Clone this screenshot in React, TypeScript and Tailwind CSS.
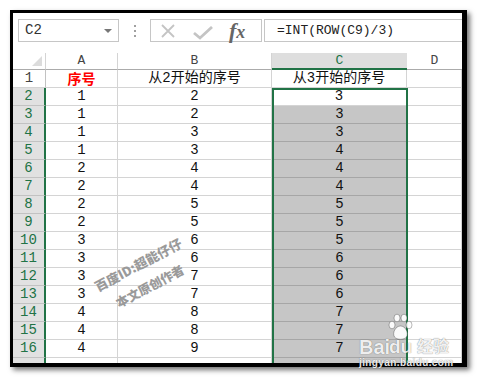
import React from "react";

const colA = [1, 1, 1, 1, 2, 2, 2, 2, 3, 3, 3, 3, 4, 4, 4];
const colB = [2, 2, 3, 3, 4, 4, 5, 5, 6, 6, 7, 7, 8, 8, 9];
const colC = [3, 3, 3, 4, 4, 4, 5, 5, 5, 6, 6, 6, 7, 7, 7];

const cell = "flex items-center justify-center border-r border-b border-[#d4d4d4] h-[18px]";
const logoText =
  "font-['Liberation_Sans',sans-serif] font-bold leading-none text-white/90 [text-shadow:0_0_1px_rgba(0,0,0,0.6)]";

const Toolbar = () => (
  <div className="flex h-[40px] shrink-0 items-start pl-[5px] pt-[6px]">
    <div className="relative flex h-[23px] w-[101px] items-center border border-[#c6c6c6] pl-[6px] text-[14px] text-[#333]">
      C2
      <div className="absolute right-[6px] top-[9px] h-0 w-0 border-x-[4px] border-t-[4px] border-x-transparent border-t-[#777]" />
    </div>
    <div className="flex h-[23px] w-[31px] flex-col items-center justify-center gap-[3px]">
      <div className="h-[2px] w-[2px] bg-[#a0a0a0]" />
      <div className="h-[2px] w-[2px] bg-[#a0a0a0]" />
      <div className="h-[2px] w-[2px] bg-[#a0a0a0]" />
    </div>
    <div className="flex h-[23px] w-[112px] items-center border border-[#c6c6c6]">
      <svg width="16" height="16" viewBox="0 0 16 16" className="ml-[9px]">
        <path d="M2 2 L14 14 M14 2 L2 14" stroke="#c4c4c4" strokeWidth="1.8" fill="none" />
      </svg>
      <svg width="20" height="14" viewBox="0 0 20 14" className="ml-[17px] mt-[4px]">
        <path d="M1 7 L7 12 L19 1" stroke="#c4c4c4" strokeWidth="2.8" fill="none" />
      </svg>
      <div className="ml-[16px] font-['Liberation_Serif',serif] text-[22px] font-bold italic leading-none text-[#666]">
        <span>f</span>
        <span className="text-[18px]">x</span>
      </div>
    </div>
    <div className="-mr-[4px] ml-[2px] flex h-[23px] flex-1 items-center border border-[#c6c6c6] pl-[12px] text-[13px] text-[#222]">
      =INT(ROW(C9)/3)
    </div>
  </div>
);

const Sheet = () => {
  const rows = [];
  for (let i = 0; i < 16; i++) {
    const r = i + 2;
    const isC2 = r === 2;
    rows.push(
      <React.Fragment key={r}>
        <div className="flex h-[18px] items-center justify-center border-b border-r-2 border-b-[#c2c2c2] border-r-[#217346] bg-[#e1e1e1] text-[#217346]">
          {r < 17 ? r : ""}
        </div>
        <div className={cell}>{colA[i] ?? ""}</div>
        <div className={cell}>{colB[i] ?? ""}</div>
        <div
          className={
            isC2
              ? cell
              : "flex h-[18px] items-center justify-center border-b border-b-[#a6a6a6] bg-[#c6c6c6]"
          }
        >
          {colC[i] ?? ""}
        </div>
        <div className={cell} />
      </React.Fragment>
    );
  }

  return (
    <div className="relative grid grid-cols-[33px_72px_154px_135px_1fr] font-['Liberation_Mono','Noto_Sans_CJK_SC',monospace] text-[14px] text-[#111]">
      {/* column headers */}
      <div className="relative h-[17px] border-r border-b border-r-[#d4d4d4] border-b-[#ababab]">
        <div className="absolute bottom-[3px] right-[3px] h-[10px] w-[10px] bg-[#dcdcdc] [clip-path:polygon(100%_0,100%_100%,0_100%)]" />
      </div>
      <div className="flex h-[17px] items-center justify-center border-r border-b border-r-[#d4d4d4] border-b-[#ababab] text-[13px] text-[#444]">
        A
      </div>
      <div className="flex h-[17px] items-center justify-center border-r border-b border-r-[#d4d4d4] border-b-[#ababab] text-[13px] text-[#444]">
        B
      </div>
      <div className="flex h-[17px] items-center justify-center border-b-2 border-b-[#217346] bg-[#dedede] text-[13px] text-[#217346]">
        C
      </div>
      <div className="flex h-[17px] items-center justify-center border-b border-b-[#ababab] text-[13px] text-[#444]">
        D
      </div>

      {/* row 1 */}
      <div className="flex h-[18px] items-center justify-center border-r border-b border-r-[#c2c2c2] border-b-[#d4d4d4] text-[#444]">
        1
      </div>
      <div className={`${cell} font-['Noto_Sans_CJK_SC',sans-serif] font-bold text-[#ff0000]`}>序号</div>
      <div className={cell}>从2开始的序号</div>
      <div className={cell}>从3开始的序号</div>
      <div className={cell} />

      {rows}

      {/* selection outline C2:C16 */}
      <div className="pointer-events-none absolute left-[259px] top-[35px] h-[290px] w-[136px] border-2 border-[#217346]" />
    </div>
  );
};

export default function App() {
  return (
    <div className="relative h-[378px] w-[477px] overflow-hidden bg-white">
      <div className="absolute left-[10px] top-[10px] h-[357px] w-[457px] overflow-hidden border-t-[3px] border-l-[3px] border-r-[5px] border-b-[4px] border-black bg-white shadow-[3px_3px_5px_rgba(0,0,0,0.55)]">
        <div className="flex h-full flex-col font-['Liberation_Mono',monospace]">
          <Toolbar />
          <Sheet />
        </div>
      </div>

      {/* author watermark */}
      <div className="pointer-events-none absolute left-[84px] top-[258px] w-[108px] -rotate-[28deg] text-center font-['Noto_Sans_CJK_SC',sans-serif] text-[13px] font-black leading-none text-[#9a9a9a]">
        百度ID:超能仔仔
      </div>
      <div className="pointer-events-none absolute left-[110px] top-[280px] w-[80px] -rotate-[28deg] text-center font-['Noto_Sans_CJK_SC',sans-serif] text-[12.5px] font-black leading-none text-[#9a9a9a]">
        本文原创作者
      </div>

      {/* baidu jingyan logo */}
      <div className="pointer-events-none absolute left-[355px] top-[310px] h-[60px] w-[100px]">
        <svg width="26" height="28" viewBox="0 0 26 28" className="absolute left-[32px] top-[3px]">
          <g fill="rgba(255,255,255,0.9)" stroke="rgba(0,0,0,0.35)" strokeWidth="0.8">
            <ellipse cx="5" cy="12" rx="3" ry="3.8" />
            <ellipse cx="10" cy="5" rx="3" ry="3.8" />
            <ellipse cx="17" cy="5" rx="3" ry="3.8" />
            <ellipse cx="22" cy="12" rx="3" ry="3.8" />
            <path d="M13.5 13 C8.5 13 5 20 7.5 24 C10 27 17 27 19.5 24 C22 20 18.5 13 13.5 13 Z" />
          </g>
        </svg>
        <span className={`absolute left-[4px] top-[27px] text-[20px] ${logoText}`}>Bai</span>
        <span className={`absolute left-[34px] top-[27px] text-[19px] ${logoText}`}>du</span>
        <span className={`absolute left-[62px] top-[27px] font-['Noto_Sans_CJK_SC',sans-serif] text-[16px] ${logoText}`}>
          经验
        </span>
        <span className={`absolute left-[4px] top-[48px] text-[10px] tracking-[0.4px] ${logoText}`}>
          jingyan.baidu.com
        </span>
      </div>
    </div>
  );
}
